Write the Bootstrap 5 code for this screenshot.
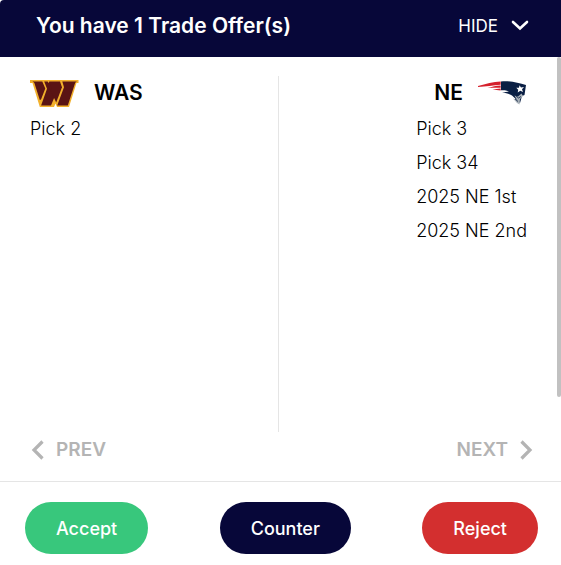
<!DOCTYPE html>
<html lang="en">
<head>
<meta charset="utf-8">
<meta name="viewport" content="width=device-width, initial-scale=1">
<title>Trade Offers</title>
<link href="https://cdn.jsdelivr.net/npm/bootstrap@5.3.0/dist/css/bootstrap.min.css" rel="stylesheet">
<style>
  :root { --navy: #070739; --muted-grey: #b4b4b4; --rule: #e5e5e5; }
  body { font-family: Inter, "Open Sans", sans-serif; font-size: 18px; color: #000; background: #fff; }
  .offer-header { background: var(--navy); height: 57px; padding: 0 32px 6px 36px; border-top-left-radius: 4px; }
  .offer-title { font-size: 21px; font-weight: 600; line-height: 30px; }
  .hide-toggle { font-size: 17px; line-height: 26px; gap: 13px; padding-top: 3px; }
  .offer-body { padding: 19px 4px 0 0; }
  .team-left { padding-left: 30px; border-right: 1px solid var(--rule); }
  .team-right { padding-right: 30px; }
  .team-head { height: 34px; gap: 15px; }
  .team-name { font-size: 21px; font-weight: 600; line-height: 30px; }
  .asset-list { font-weight: 300; line-height: 34px; padding-top: 2px; }
  .scroll-thumb { top: 0; right: 0; width: 4px; height: 80%; background: #c1c1c1; border-radius: 2px; }
  .pager { height: 50px; padding: 0 28px 13px 31px; border-bottom: 1px solid var(--rule); }
  .pager-btn { font-size: 19px; font-weight: 600; line-height: 30px; color: var(--muted-grey); gap: 12px; }
  .actions { padding: 20px 23px 11px 25px; }
  .action-btn { height: 52px; padding: 0 31px; font-size: 18px; font-weight: 500; color: #fff; }
  .btn-accept { background: #38c77c; }
  .btn-counter { background: var(--navy); }
  .btn-reject { background: #d32f2f; }
</style>
</head>
<body>
<div class="d-flex flex-column min-vh-100">
  <header class="offer-header d-flex align-items-center justify-content-between text-white">
    <h1 class="offer-title m-0">You have 1 Trade Offer(s)</h1>
    <button type="button" class="hide-toggle btn p-0 border-0 text-white d-flex align-items-center">
      HIDE
      <svg width="18" height="11" viewBox="0 0 18 11" fill="none" stroke="currentColor" stroke-width="2.600" stroke-linecap="round" aria-hidden="true"><path d="M2 2l7 6.500 7-6.500"/></svg>
    </button>
  </header>

  <main class="flex-grow-1 d-flex flex-column position-relative">
    <div class="offer-body d-flex flex-grow-1">
      <section class="team-left w-50">
        <div class="team-head d-flex align-items-center">
          <svg width="49" height="27" viewBox="0 0 49 27" role="img" aria-label="Washington logo">
            <path fill="#f2b02c" d="M0 0H48.500V3H46.500L39 27H9.800L2.500 3H0z"/>
            <g fill="#5a1414">
              <path d="M2.500 1.500H12.300L15.300 8.500L11 19.500L9.800 20L4.300 2.800z"/>
              <path d="M14.200 1.500H17.700L24.700 16.500L21 25.400H11.100L17 8.800z"/>
              <path d="M19.300 1.500H30L32 7.200L26.200 22.500L18 5z"/>
              <path d="M32.300 1.500H46.800L45.200 2.700L37.800 25.400H27.200L34 7.200z"/>
            </g>
            <path fill="#fff" d="M24 27L25.500 23.500L27 27z"/>
            <path fill="none" stroke="#5a1414" stroke-width="2" d="M18 3L21 9.500"/>
          </svg>
          <h2 class="team-name m-0">WAS</h2>
        </div>
        <ul class="asset-list list-unstyled m-0">
          <li>Pick 2</li>
        </ul>
      </section>
      <section class="team-right w-50 d-flex flex-column align-items-end">
        <div class="team-head d-flex align-items-center">
          <h2 class="team-name m-0">NE</h2>
          <svg width="49" height="24" viewBox="0 0 49 24" role="img" aria-label="New England logo">
            <path fill="#d5202c" d="M0 5C8 2.800 15 1 22.700 .500V3.700C15 4.200 8 5.500 0 5.900z"/>
            <path fill="#d5202c" d="M9.500 7C14 5.600 18 4.600 22.700 4.400V6.700C18 6.600 14 6.800 9.500 7z"/>
            <path fill="#d5202c" d="M14.500 8.600L22.700 7.400V9.500L14.500 8.600z"/>
            <path fill="#0a1f44" d="M23 .500C32 -.500 40 2 48 4L46.500 14L44 15L42 22L34 14.500C31 12.800 28 11.800 24 11.500C27 11 29 10.800 31 10.500C28 9 25.500 9.500 23 9.300z"/>
            <path fill="#a8b0b7" d="M36.500 14.500L40 15.500L43.500 12.500L45 15L42 18L41.500 23.500L39 22L35 17.500L39 19z"/>
            <path fill="none" stroke="#0a1f44" stroke-width=".8" d="M37.500 14.500L40.500 17L43 15.500M37 18L40 20.500"/>
            <path fill="#fff" d="M41.500 4.300L43 6.600L46 6L44 8.200L45 11L42.300 9.800L39.700 11.500L40.200 8.700L38.300 6.800L41 6.700z"/>
          </svg>
        </div>
        <ul class="asset-list list-unstyled m-0">
          <li>Pick 3</li>
          <li>Pick 34</li>
          <li>2025 NE 1st</li>
          <li>2025 NE 2nd</li>
        </ul>
      </section>
    </div>
    <nav class="pager d-flex align-items-center justify-content-between" aria-label="Trade offers">
      <button type="button" class="pager-btn btn p-0 border-0 d-flex align-items-center">
        <svg width="13" height="20" viewBox="0 0 13 20" fill="none" stroke="currentColor" stroke-width="3.200" aria-hidden="true"><path d="M11.500 1.500L3 10l8.500 8.500"/></svg>
        PREV
      </button>
      <button type="button" class="pager-btn btn p-0 border-0 d-flex align-items-center">
        NEXT
        <svg width="13" height="20" viewBox="0 0 13 20" fill="none" stroke="currentColor" stroke-width="3.200" aria-hidden="true"><path d="M1.500 1.500L10 10l-8.500 8.500"/></svg>
      </button>
    </nav>
    <div class="scroll-thumb position-absolute" aria-hidden="true"></div>
  </main>

  <footer class="actions d-flex align-items-center justify-content-between">
    <button type="button" class="action-btn btn-accept btn border-0 rounded-pill">Accept</button>
    <button type="button" class="action-btn btn-counter btn border-0 rounded-pill">Counter</button>
    <button type="button" class="action-btn btn-reject btn border-0 rounded-pill">Reject</button>
  </footer>
</div>
<script src="https://cdn.jsdelivr.net/npm/bootstrap@5.3.0/dist/js/bootstrap.bundle.min.js"></script>
</body>
</html>
